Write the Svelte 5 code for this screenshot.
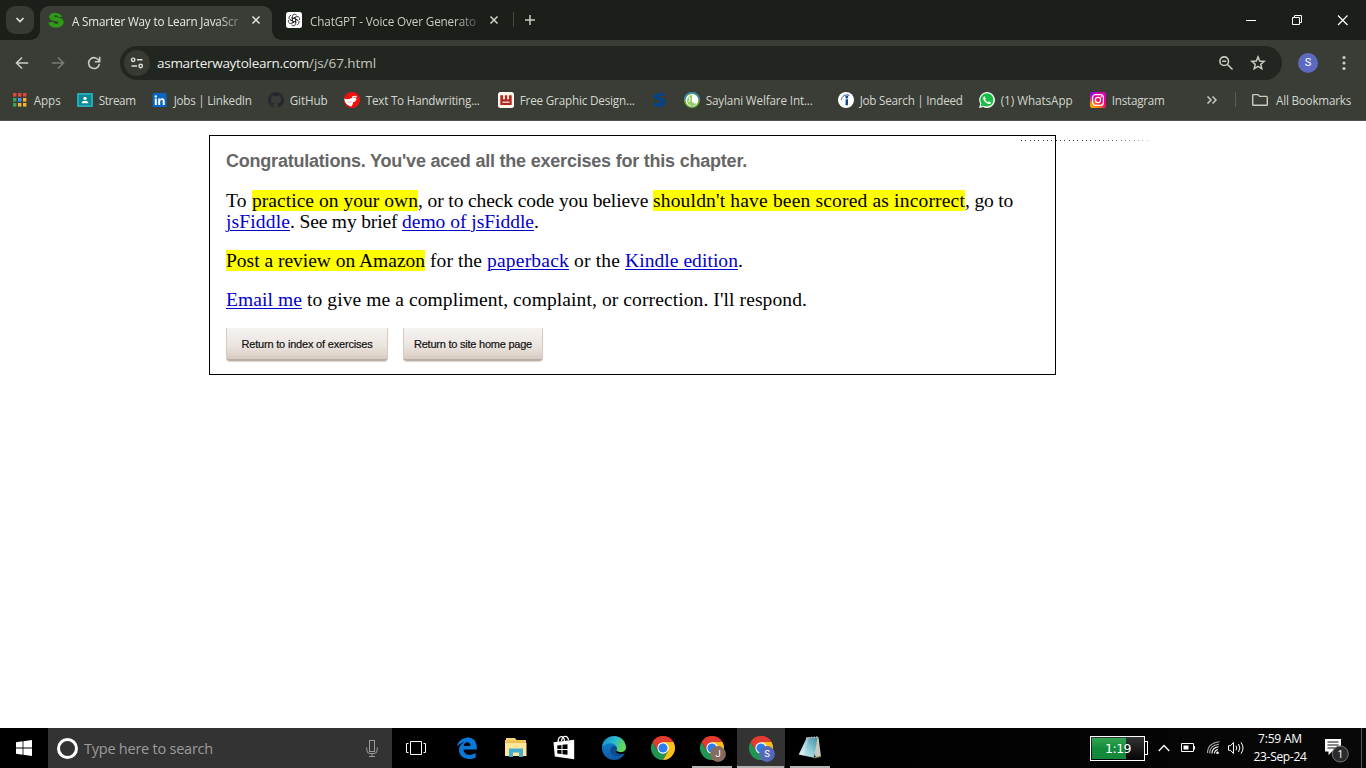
<script>
  // Spreads a text run over its intended width with letter-spacing.
  function fit(node, width) {
    const n = node.textContent.length;
    const natural = node.getBoundingClientRect().width;
    node.style.letterSpacing = `${(width - natural) / n}px`;
  }

  const bookmarks = [
    { icon: 'apps', label: 'Apps', text: 27, slot: 65 },
    { icon: 'stream', label: 'Stream', text: 37, slot: 75 },
    { icon: 'linkedin', label: 'Jobs | LinkedIn', text: 78, slot: 116 },
    { icon: 'github', label: 'GitHub', text: 38, slot: 76 },
    { icon: 'hand', label: 'Text To Handwriting...', text: 114, slot: 154 },
    { icon: 'design', label: 'Free Graphic Design...', text: 115, slot: 154 },
    { icon: 'blue', label: '', text: 0, slot: 32 },
    { icon: 'saylani', label: 'Saylani Welfare Int...', text: 107, slot: 154 },
    { icon: 'indeed', label: 'Job Search | Indeed', text: 103, slot: 141 },
    { icon: 'whatsapp', label: '(1) WhatsApp', text: 72, slot: 111 },
    { icon: 'instagram', label: 'Instagram', text: 53, slot: 116 }
  ];
  const appColors = ['#e2493b', '#e2493b', '#e2493b', '#3aa757', '#4b8df8', '#f3b52b', '#3aa757', '#f3b52b', '#f3b52b'];
</script>

{#snippet chrome(badge, color)}
  <svg width="28" height="28" viewBox="0 0 28 28">
    <path d="M12 12 1.6 6A12 12 0 0 1 22.4 6L24 12Z" fill="#e33b2e" />
    <path d="M1.6 6A12 12 0 0 0 12 24L17.2 15 12 12 6.8 15Z" fill="#219653" />
    <path d="M22.4 6H12L17.2 15 12 24A12 12 0 0 0 22.4 6Z" fill="#fbc116" />
    <path d="M1.6 6A12 12 0 0 1 22.4 6H12A6 6 0 0 0 6.8 15Z" fill="#e33b2e" />
    <circle cx="12" cy="12" r="5.8" fill="#fff" />
    <circle cx="12" cy="12" r="4.6" fill="#2f7de9" />
    {#if badge}
      <circle cx="18" cy="18" r="7.9" fill={color} />
      <text x="18" y="21.3" text-anchor="middle" font-size="9.5" fill="#fff">{badge}</text>
    {/if}
  </svg>
{/snippet}

{#snippet favicon(name)}
  <svg width="16" height="16" viewBox="0 0 16 16">
    {#if name === 'apps'}
      {#each appColors as c, i}
        <rect x={1 + (i % 3) * 5} y={1 + Math.floor(i / 3) * 5} width="3.4" height="3.6" fill={c} />
      {/each}
    {:else if name === 'stream'}
      <rect y="1" width="16" height="14" rx="1" fill="#25aab8" />
      <rect x="2" y="3" width="12" height="10" fill="#0c8793" />
      <circle cx="8" cy="6.4" r="1.7" fill="#fff" />
      <path d="M4.4 11.2Q5 8.8 8 8.8T11.6 11.2Z" fill="#fff" />
    {:else if name === 'linkedin'}
      <rect x=".6" y="1" width="14" height="14" rx="1" fill="#0a66c2" />
      <circle cx="3.8" cy="4.4" r="1.2" fill="#fff" />
      <path d="M2.8 6.4h2V13h-2zM6.2 6.4h1.9v1c.5-.8 1.1-1.2 2.1-1.2 1.9 0 2.5 1.2 2.5 3.1V13h-2V9.7c0-1-.2-1.7-1.1-1.7S8.2 8.700 8.200 9.700V13h-2z" fill="#fff" />
    {:else if name === 'github'}
      <path fill="#25292e" d="M8 0C3.580 0 0 3.580 0 8c0 3.540 2.290 6.530 5.470 7.590.4.070.550-.170.550-.380v-1.490c-2.010.370-2.530-.490-2.690-.940-.090-.230-.480-.940-.820-1.130-.280-.150-.680-.520-.010-.530.630-.010 1.080.580 1.230.820.720 1.210 1.870.870 2.330.660.070-.520.280-.870.510-1.070-1.780-.2-3.640-.890-3.640-3.950 0-.870.310-1.590.820-2.150-.080-.2-.360-1.020.080-2.120 0 0 .670-.210 2.200.820a7.500 7.500 0 0 1 4 0c1.530-1.040 2.200-.820 2.200-.820.440 1.100.160 1.920.080 2.120.510.560.820 1.270.820 2.150 0 3.070-1.870 3.750-3.650 3.950.290.250.540.730.540 1.480v2.200c0 .210.150.460.550.380A8 8 0 0 0 8 0Z" />
    {:else if name === 'hand'}
      <circle cx="8" cy="8" r="8" fill="#ef1010" />
      <path d="M.3 6.500Q3.500 8.200 7 6.300C10 4.800 12.300 5.800 12.500 7.600Q11.500 10 9.200 10.300L8.600 12.500 7.400 14.600Q2.500 13.500.8 9.600Z" fill="#fff" />
      <path d="M8 5.600Q10.500 3.400 12.600 5.200" stroke="#fff" stroke-width="1.300" fill="none" />
      <path d="M3.800 9.700q2 1.300 4 0" stroke="#efaaaa" fill="none" />
    {:else if name === 'design'}
      <rect width="16" height="16" rx="2.500" fill="#fff7eb" />
      <path d="M2.300 3.300h2.800v4h1.800v-4h2.300v4h1.700v-4h2.800v9.700H2.300z" fill="#b42a20" />
      <path d="M4.500 10.200h7" stroke="#fff7eb" stroke-width="1.200" />
    {:else if name === 'blue'}
      <path d="M12.700 1.500C9 .4 1.800.4 1.800 5c0 3.300 7.500 3.100 7.500 4.900 0 1.700-4.500 1.200-7.300.1v4.200c4.800 1.600 11.900.8 11.900-4.500 0-4-7.500-3.700-7.500-5.200 0-1.300 4-.9 6.300.1z" fill="#064287" />
    {:else if name === 'saylani'}
      <circle cx="8" cy="8" r="8" fill="#6ba936" />
      <path d="M.6 8A7.400 7.400 0 0 1 15.400 8" stroke="#317fc1" stroke-width="1.300" fill="none" />
      <circle cx="8" cy="8.300" r="6.300" fill="#fff" />
      <path d="M8 3C4 3.500 2.500 6.500 3.300 10.500 4.500 14 10 15.500 13 11.500 9.500 12 7.500 10.300 8 7z" fill="#95cc66" />
      <path d="M5 4.500 6.200 8 4.500 10" stroke="#fff" fill="none" />
    {:else if name === 'indeed'}
      <circle cx="8" cy="8" r="8" fill="#fff" />
      <circle cx="8.800" cy="5" r="1.500" fill="#174689" />
      <path d="M7.600 7.300q1.200.4 2.400-.3v6.300H7.600z" fill="#174689" />
      <path d="M3.300 7.800C4 4 7 2 11.500 3.300" fill="none" stroke="#174689" stroke-width=".9" />
    {:else if name === 'whatsapp'}
      <path d="M0 16 1.200 11.900A7.900 7.900 0 1 1 4.200 14.900Z" fill="#fff" />
      <path d="M1.500 14.500 2.400 11.600A6.600 6.600 0 1 1 4.700 13.700Z" fill="#18bd43" />
      <path d="M5.600 4.200 6.900 6.700 6.100 7.600q.9 1.800 2.700 2.600l1-.9 2.300 1.200c-.3 1.600-2 1.900-3.300 1.300C6.100 10.800 3.900 8 4.200 5.800q.4-1.300 1.400-1.600Z" fill="#fff" />
    {:else if name === 'instagram'}
      <defs>
        <linearGradient id="ig" x1="0" y1="1" x2=".8" y2="0">
          <stop offset="0" stop-color="#ffc000" /><stop offset=".3" stop-color="#ff7515" />
          <stop offset=".55" stop-color="#ff0069" /><stop offset="1" stop-color="#d300c5" />
        </linearGradient>
        <radialGradient id="igp" cx="0" cy="0" r=".7">
          <stop offset="0" stop-color="#6c0fff" /><stop offset="1" stop-color="#b400e0" stop-opacity="0" />
        </radialGradient>
      </defs>
      <rect width="16" height="16" rx="2.500" fill="url(#ig)" />
      <rect width="16" height="16" rx="2.500" fill="url(#igp)" />
      <rect x="2.600" y="2.600" width="10.800" height="10.800" rx="3" fill="none" stroke="#fff" stroke-width="1.200" />
      <circle cx="8" cy="8" r="2.600" fill="none" stroke="#fff" stroke-width="1.200" />
      <circle cx="11.200" cy="4.800" r=".7" fill="#fff" />
    {/if}
  </svg>
{/snippet}

<div class="screen">
  <header class="strip">
    <button class="tabsearch" aria-label="Search tabs">
      <svg width="12" height="12" viewBox="0 0 12 12"><path d="M2.500 4 6 7.600 9.500 4" fill="none" stroke="#dce0d8" stroke-width="1.700" /></svg>
    </button>
    <div class="tab active">
      <svg width="16" height="16" viewBox="0 0 16 16"><path d="M14.300 4.700C12.700.2 1.200-1 1.200 4.800c0 5.600 9.300 3.400 9.300 5.800 0 2-4.700 1.800-5.600-.8L.4 10.700C1.500 17.300 15.700 17.300 15.700 10.100 15.700 4.300 6.100 6 6.100 4.300c0-1.500 3-1.500 3.900.7z" fill="#2d9c12" /></svg>
      <span class="title"><span use:fit={166}>A Smarter Way to Learn JavaScr</span></span>
      <svg class="x" width="10" height="10" viewBox="0 0 10 10"><path d="m1.500 1.500 7 7m0-7-7 7" stroke="#e6e9e3" stroke-width="1.500" /></svg>
    </div>
    <div class="tab idle">
      <svg width="16" height="16" viewBox="0 0 16 16">
        <rect width="16" height="16" rx="2.500" fill="#fff" />
        <g fill="none" stroke="#222" stroke-width=".8">
          {#each [0, 60, 120, 180, 240, 300] as a}
            <path transform="rotate({a} 8 8)" d="M6.300 9V4.700Q6.400 2 8.800 2.200 10 2.300 10.700 3.200M6.300 7 9.900 4.900" />
          {/each}
        </g>
      </svg>
      <span class="title dim"><span use:fit={166}>ChatGPT - Voice Over Generato</span></span>
      <svg class="x" width="10" height="10" viewBox="0 0 10 10"><path d="m1.500 1.500 7 7m0-7-7 7" stroke="#d0d4cc" stroke-width="1.500" /></svg>
    </div>
    <i class="tabdivider"></i>
    <svg class="plus" width="12" height="12" viewBox="0 0 12 12"><path d="M6 1v10M1 6h10" stroke="#c8ccc4" stroke-width="1.500" /></svg>
    <svg class="winctl" width="104" height="12" viewBox="0 0 104 12" fill="none" stroke="#fff">
      <path d="M0 6.500h10M46.500 3.500h7v7h-7zM48.500 3.500v-2h7v7h-2" /><path d="m92 1.500 9.500 9.500m0-9.500L92 11" stroke-width="1.200" />
    </svg>
  </header>

  <div class="toolbar">
    <svg width="16" height="16" viewBox="0 0 16 16" fill="none" stroke="#c7cbc2" stroke-width="1.600"><path d="M14.200 8H2.700M8 2.500 2.500 8 8 13.500" /></svg>
    <svg class="fwd" width="16" height="16" viewBox="0 0 16 16" fill="none" stroke="#777b72" stroke-width="1.600"><path d="M1.800 8h11.500M8 2.500 13.500 8 8 13.500" /></svg>
    <svg class="reload" width="16" height="16" viewBox="0 0 16 16" fill="none" stroke="#c7cbc2" stroke-width="1.600"><path d="M13.200 6.500A5.400 5.400 0 1 0 13.400 8.800M13.700 1.800v4.900H8.800" /></svg>
    <div class="omnibox">
      <span class="site">
        <svg width="14" height="14" viewBox="0 0 14 14" fill="none" stroke="#dce0d8" stroke-width="1.400"><circle cx="3.200" cy="3.800" r="1.700" /><path d="M7 3.800h5.500M1.500 10H7" /><circle cx="10.700" cy="10" r="1.700" /></svg>
      </span>
      <span class="url"><span class="host" use:fit={152}>asmarterwaytolearn.com</span><span use:fit={67}>/js/67.html</span></span>
      <svg class="zoom" width="16" height="16" viewBox="0 0 16 16" fill="none" stroke="#c7cbc2" stroke-width="1.600"><circle cx="6.200" cy="6.200" r="4.300" /><path d="m9.500 9.500 5 5M4.200 6.200h4" /></svg>
      <svg width="16" height="16" viewBox="0 0 16 16" fill="none" stroke="#c7cbc2" stroke-width="1.500"><path d="m8 1.900 1.700 4.100 4.500.4-3.400 2.900 1 4.400L8 11.400l-3.800 2.300 1-4.400-3.400-2.900 4.500-.4z" /></svg>
    </div>
    <span class="avatar">S</span>
    <svg class="menu" width="4" height="16" viewBox="0 0 4 16" fill="#c7cbc2"><circle cx="2" cy="2.500" r="1.600" /><circle cx="2" cy="8" r="1.600" /><circle cx="2" cy="13.500" r="1.600" /></svg>
  </div>

  <nav class="bookmarks">
    {#each bookmarks as b}
      <div class="bm" style:width="{b.slot}px">
        {@render favicon(b.icon)}
        {#if b.label}<span use:fit={b.text}>{b.label}</span>{/if}
      </div>
    {/each}
    <svg class="more" width="12" height="10" viewBox="0 0 12 10" fill="none" stroke="#c7cbc2" stroke-width="1.500"><path d="m1.500 1.500 3.500 3.500-3.500 3.500M6.500 1.500 10 5 6.500 8.500" /></svg>
    <i class="bmdivider"></i>
    <svg width="16" height="14" viewBox="0 0 16 14" fill="none" stroke="#c7cbc2" stroke-width="1.400"><path d="M1.600 12.300q-.9 0-.9-.9V2.500q0-.9.9-.9H6l1.700 1.800h6.700q.9 0 .9.900v7.100q0 .9-.9.900z" /></svg>
    <span class="all" use:fit={75}>All Bookmarks</span>
  </nav>

  <main>
    <section class="card">
      <h1><span use:fit={521}>Congratulations. You've aced all the exercises for this chapter.</span></h1>
      <p>
        <span use:fit={26}>To&nbsp;</span><mark use:fit={166}>practice on your own</mark><span use:fit={235}>, or to check code you believe&nbsp;</span><mark use:fit={312}>shouldn't have been scored as incorrect</mark><span use:fit={48}>, go to</span><br />
        <a href="#top" use:fit={64}>jsFiddle</a><span use:fit={112}>. See my brief&nbsp;</span><a href="#top" use:fit={132}>demo of jsFiddle</a>.
      </p>
      <p>
        <mark use:fit={199}>Post a review on Amazon</mark><span use:fit={62}>&nbsp;for the&nbsp;</span><a href="#top" use:fit={82}>paperback</a><span use:fit={56}>&nbsp;or the&nbsp;</span><a href="#top" use:fit={113}>Kindle edition</a>.
      </p>
      <p>
        <a href="#top" use:fit={76}>Email me</a><span use:fit={505}>&nbsp;to give me a compliment, complaint, or correction. I'll respond.</span>
      </p>
      <div class="buttons">
        <button class="index"><span use:fit={131}>Return to index of exercises</span></button>
        <button class="home"><span use:fit={118}>Return to site home page</span></button>
      </div>
      <i class="dots"></i>
    </section>
  </main>

  <footer class="taskbar">
    <div class="start">
      <svg width="16" height="16" viewBox="0 0 16 16" fill="#fff"><path d="M0 2.200 6.600 1.300v6.300H0zM7.400 1.200 16 0v7.600H7.400zM0 8.400h6.600v6.300L0 13.800zM7.400 8.400H16V16l-8.600-1.200z" /></svg>
    </div>
    <div class="search">
      <span class="ring"></span>
      <span class="hint"><span use:fit={129}>Type here to search</span></span>
      <svg width="12" height="17" viewBox="0 0 12 17" fill="none" stroke="#999"><rect x="3.500" y=".5" width="5" height="11" /><path d="M.8 7.500V10q0 3.500 3.200 3.500h4q3.200 0 3.200-3.500V7.500M6 13.500v3M3 16.500h6" /></svg>
    </div>
    <div class="cell view">
      <svg width="20" height="14" viewBox="0 0 20 14" fill="none" stroke="#fff"><path d="M4.500.5h11v13h-11zM2.500 2.500h-2v9h2M17.500 2.500h2v9h-2" /></svg>
    </div>
    <div class="cell off1">
      <svg width="20" height="22" viewBox="0 0 20 22"><path d="M0 9.600C1.400-.8 18.600-4 19.800 9.500v3.100H6.500c.4 6.300 7.600 6.400 12.200 3.500v4.300C11.700 24 1.900 21.400 2 12.800 2.100 8.500 5 6.500 7.700 5.200 4.500 5.700 1.800 7.200 0 9.600ZM6.700 9h6.700C13.500 3.800 7.200 4.500 6.700 9Z" fill="#0879d9" /></svg>
    </div>
    <div class="cell off1">
      <svg width="22" height="20" viewBox="0 0 22 20"><path d="M0 2h1V0h9l1.500 2H21v16H0z" fill="#f7d477" /><path d="M1 2.500h20v3H0z" fill="#f1bf54" /><path d="M0 5h21.500v13H0z" fill="#ffe699" /><path d="M4 19v-8.500h14V19h-4v-4.500H8V19z" fill="#43add1" /></svg>
    </div>
    <div class="cell">
      <svg width="22" height="24" viewBox="0 0 22 24"><path d="M5 6C5.500-1 11-1 11.500 5M8.500 5C9.500-1 14.500-1 15.500 4" fill="none" stroke="#fff" stroke-width="1.300" /><path d="m.5 6.200 20.700-2.400v19.500L1.800 20.600z" fill="#fff" /><path d="M4.300 9.500 8.500 9v4H4.300zM9.500 8.800l5-.6V13h-5zM4.300 14h4.200v4l-4.200-.5zM9.500 14h5v4.800l-5-.6z" fill="#000" /></svg>
    </div>
    <div class="cell off1">
      <svg width="24" height="24" viewBox="0 0 24 24">
        <defs>
          <linearGradient id="e1" x1="0" y1="0" x2="1" y2=".3"><stop offset="0" stop-color="#1687c8" /><stop offset=".55" stop-color="#28bdd0" /><stop offset="1" stop-color="#67d94c" /></linearGradient>
          <linearGradient id="e2" x1="0" y1="0" x2="0" y2="1"><stop offset="0" stop-color="#1589d8" /><stop offset="1" stop-color="#0c59a4" /></linearGradient>
        </defs>
        <circle cx="12" cy="12" r="12" fill="url(#e2)" />
        <path d="M.2 11C1-2.500 22.500-4 24 11.500c0 4-4.500 6-8.500 4.500-2-.8-.7-1.700-.5-3.600C14 6 5 5.500.2 11Z" fill="url(#e1)" />
        <path d="M15 12C13 8.500 8.500 10 8.300 14.500 8.200 20 15 22 21.800 18.500 18 19 13 17.500 14.300 14.800Z" fill="#114a8b" />
        <path d="M14.600 14.500C13 17 17 19.300 22.300 17.600L24 16.500V13C22 17 17 17 14.600 14.500Z" fill="#000" />
      </svg>
    </div>
    <div class="cell chr">{@render chrome('', '')}</div>
    <div class="cell chr run">{@render chrome('J', '#866b60')}</div>
    <div class="cell chr current">{@render chrome('S', '#5669b9')}</div>
    <div class="cell run note">
      <svg width="24" height="24" viewBox="0 0 24 24">
        <defs><linearGradient id="np" x1="1" y1="0" x2="0" y2="1"><stop offset="0" stop-color="#3f8fa5" /><stop offset=".5" stop-color="#8fcbd8" /><stop offset="1" stop-color="#e6f5f8" /></linearGradient></defs>
        <path d="m8.500 1.500 12-.3L23 20.500l-5 1z" fill="#c7c9bc" />
        <path d="m8.500 2 11-.2-3.500 20L.8 18.500z" fill="url(#np)" />
        <path d="m4.500 11.500 4-9 2-.2-4.500 17.500-5.200-1.300z" fill="#fff" opacity=".28" />
        <path d="M8 2 20.500 1" stroke="#bbb" stroke-width="1.500" stroke-dasharray="1.500 1" />
        <path d="m16 21.800 7-1.300" stroke="#857453" stroke-width="1.200" />
      </svg>
    </div>
    <div class="tray">
      <div class="battery"><span class="level"><span use:fit={26}>1:19</span></span><i class="nub"></i></div>
      <svg class="up" width="12" height="8" viewBox="0 0 12 8" fill="none" stroke="#fff" stroke-width="1.300"><path d="M.7 7 6 1.500 11.300 7" /></svg>
      <svg class="pwr" width="15" height="10" viewBox="0 0 15 10"><path d="M.5.5h12v8H.5zM13.500 3v3.500" fill="none" stroke="#fff" /><path d="M2.500 2.500h5v4h-5z" fill="#fff" /></svg>
      <svg class="wifi" width="14" height="14" viewBox="0 0 14 14" fill="none" stroke="#fff" stroke-width="1.100"><circle cx="10.500" cy="11.800" r="1.300" fill="#fff" stroke="none" /><path d="M7.500 12.500Q7.500 9.300 11 8.500M5 12.500Q5 6.700 11.500 5.800" /><path d="M2.700 12.500Q2.500 4.300 12 3.300M.6 12Q.3 2.300 12.500.8" stroke="#aaa" /></svg>
      <svg class="vol" width="17" height="14" viewBox="0 0 17 14" fill="none" stroke="#fff"><path d="M.5 4.700h2l3-3.200v11l-3-3.200h-2zM8 4.700q1.500 2.300 0 4.600M10.500 3q2.700 4 0 8M13 1.300q4 5.700 0 11.400" /></svg>
      <div class="clock"><span><span use:fit={44}>7:59 AM</span></span><span><span use:fit={53}>23-Sep-24</span></span></div>
      <svg class="notes" width="26" height="26" viewBox="0 0 26 26">
        <path d="M1 2h16v12.500H8L4.500 18v-3.500H1z" fill="#fff" /><path d="M3.500 5h11M3.500 8h11M3.500 11h8" stroke="#111" />
        <circle cx="16.300" cy="17" r="8" fill="#2b2b2b" stroke="#777" />
        <text x="16.300" y="21" text-anchor="middle" font-size="11" fill="#fff">1</text>
      </svg>
      <i class="peek"></i>
    </div>
  </footer>
</div>

<style>
  :global(body) { margin: 0; overflow: hidden; background: #fff; }
  .screen { width: 1366px; height: 768px; display: flex; flex-direction: column; overflow: hidden; font-family: 'Open Sans', sans-serif; font-size: 11.700px; color: #d3d6cf; }
  .screen * { box-sizing: border-box; }
  svg { display: block; flex: none; overflow: visible; }
  span { white-space: nowrap; }
  button { padding: 0; border: 0; font: inherit; }

  .strip { height: 40px; flex: none; display: flex; background: #1b1f1a; }
  .tabsearch { width: 28px; height: 28px; margin: 6px 6px 0; border-radius: 9px; background: #363a33; display: grid; place-items: center; }
  .tab { display: flex; align-items: center; height: 34px; margin-top: 6px; padding: 0 0 6px 8px; }
  .tab.active { position: relative; width: 232px; background: #393d35; border-radius: 9px 9px 0 0; }
  .tab.active::before, .tab.active::after { content: ''; position: absolute; bottom: 0; width: 9px; height: 9px; }
  .tab.active::before { left: -9px; background: radial-gradient(circle at 0 0, transparent 8.500px, #393d35 9px); }
  .tab.active::after { right: -9px; background: radial-gradient(circle at 100% 0, transparent 8.500px, #393d35 9px); }
  .tab.idle { width: 241px; padding-left: 14px; }
  .title { width: 168px; margin: 1px 0 0 8px; color: #e7eae4; mask-image: linear-gradient(90deg, #000 145px, #0004 168px); }
  .title.dim { width: 167px; margin-left: 8px; color: #c8ccc4; }
  .x { margin-left: 11px; }
  .idle .x { margin-left: 12px; }
  .tabdivider { width: 1px; height: 15px; margin: 12px 0 0; background: #464a42; }
  .plus { margin: 14px 0 0 10px; }
  .winctl { margin: 14px 16px 0 auto; }

  .toolbar { height: 46px; flex: none; display: flex; align-items: center; background: #393d35; padding-left: 14px; }
  .fwd { margin-left: 20px; }
  .reload { margin-left: 20px; }
  .omnibox { width: 1162px; height: 34px; margin-left: 18px; padding: 0 16px 0 4px; border-radius: 17px; background: #222620; display: flex; align-items: center; }
  .site { width: 26px; height: 26px; border-radius: 50%; background: #363a33; display: grid; place-items: center; }
  .url { flex: 1; margin-left: 7px; font-size: 13.500px; color: #c3c7be; }
  .host { color: #eceee9; }
  .zoom { margin-right: 16px; }
  .avatar { width: 20px; height: 20px; margin-left: 16px; border-radius: 50%; background: #5c6bc0; color: #fff; font: 11px/20px Roboto, sans-serif; text-align: center; }
  .menu { margin-left: 24px; }

  .bookmarks { height: 35px; flex: none; display: flex; align-items: center; padding: 0 0 7px 12px; background: #393d35; border-bottom: 1px solid #50544c; }
  .bm { display: flex; flex: none; gap: 5.700px; align-items: center; }
  .more { margin: 0 17px 0 0; }
  .bmdivider { width: 1px; height: 15px; margin-right: 16px; background: #585c53; }
  .all { margin-left: 8px; }

  main { flex: 1; padding: 14px 0 0 209px; background: #fff; }
  .card { position: relative; width: 847px; height: 240px; padding: 15px 16px 0; border: 1px solid #000; color: #000; font: 19.500px/21px 'Liberation Serif', serif; }
  h1 { margin: 0 0 18px; font: bold 18px/21px 'Liberation Sans', sans-serif; color: #666; }
  p { margin: 0 0 18px; white-space: nowrap; }
  mark { background: #ff0; color: #000; }
  a { color: #00c; text-decoration: underline; text-decoration-thickness: 1px; text-underline-offset: 2px; }
  .buttons { display: flex; gap: 15px; }
  .buttons button { height: 33px; border: 1px solid #d4cdc6; border-top: 0; border-bottom: 2px solid #b9aea5; border-radius: 0 0 4px 4px; background: linear-gradient(#f5f2f0, #ece6e1 55%, #d8ccc1); box-shadow: 0 1px 1px #ddd5ce; color: #111; font: 11px/33px 'Liberation Sans', sans-serif; -webkit-text-stroke: .2px #111; }
  .buttons .index { width: 162px; }
  .buttons .home { width: 140px; }
  .dots { position: absolute; left: 811px; top: 4px; width: 128px; height: 1px; background: repeating-linear-gradient(90deg, #333 0 1px, transparent 1px 4.330px); mask-image: linear-gradient(90deg, #000 55%, #0004); }

  .taskbar { height: 40px; flex: none; display: flex; background: #000; color: #fff; }
  .start { width: 48px; display: grid; place-items: center; }
  .search { width: 344px; display: flex; align-items: center; padding: 0 14px 0 9px; background: #333; color: #9b9b9b; font-size: 14.500px; }
  .ring { width: 21px; height: 21px; border: 3px solid #fff; border-radius: 50%; }
  .hint { flex: 1; margin-left: 6px; }
  .cell { width: 49px; height: 40px; display: flex; align-items: center; justify-content: center; flex: none; }
  .view { padding-right: 1px; }
  .off1 { padding-left: 2px; }
  .chr { padding: 4px 0 0 6px; font-family: Roboto, sans-serif; }
  .run { background: linear-gradient(#b5b3b0, #b5b3b0) 6px 100% / 40px 2px no-repeat; }
  .current { position: relative; background: linear-gradient(#b5b3b0, #b5b3b0) 2px 100% / 47px 2px no-repeat, linear-gradient(#333, #333) 2px 0 / 47px 100% no-repeat; box-shadow: 1px 0 #333; }
  .note { padding-left: 2px; }
  .tray { flex: 1; display: flex; align-items: center; justify-content: flex-end; background: linear-gradient(90deg, #000, #080808); }
  .battery { display: flex; align-items: center; }
  .level { width: 55px; height: 25px; padding-left: 14px; border: 1px solid #fff; background: linear-gradient(#32a653, #138b3b 50%, #12883a) 1px 1px / 34px 21px no-repeat, linear-gradient(#333, #050505); font: 12.500px/23px 'DejaVu Sans', sans-serif; }
  .nub { width: 3px; height: 14px; border: 1px solid #fff; border-left: 0; }
  .up { margin-left: 10px; }
  .pwr { margin-left: 11px; }
  .wifi { margin-left: 11px; }
  .vol { margin-left: 7px; }
  .clock { width: 54px; margin-left: 8px; display: flex; flex-direction: column; align-items: center; font-size: 12px; line-height: 18px; }
  .notes { margin: 4px 0 0 17px; }
  .peek { width: 1px; height: 40px; margin: 0 4px 0 11px; background: #555; }
</style>
